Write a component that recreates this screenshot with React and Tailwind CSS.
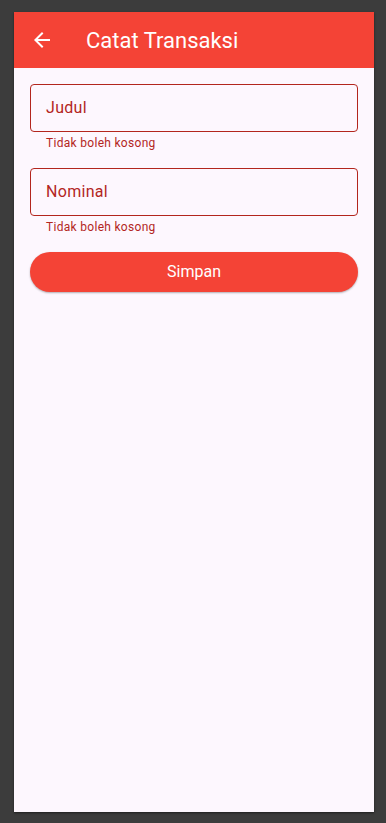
import React from "react";

const ArrowBack = ({ size = 24 }) => (
  <svg width={size} height={size} viewBox="0 0 24 24" fill="currentColor">
    <path d="M20 11H7.83l5.59-5.59L12 4l-8 8 8 8 1.41-1.41L7.83 13H20v-2z" />
  </svg>
);

const Field = ({ label }) => (
  <div className="flex flex-col">
    <div className="h-[48px] rounded-[4px] border border-[#b3261e] flex items-center px-[15px] text-[16px] text-[#b3261e] tracking-[0.3px]">
      {label}
    </div>
    <div className="px-4 pt-[3px] pb-[1px] text-[12px] leading-[16px] text-[#b3261e] tracking-[0.3px]">
      Tidak boleh kosong
    </div>
  </div>
);

export default function App() {
  return (
    <div
      className="w-[386px] h-[823px] bg-[#3c3c3c] pt-[12px] pl-[14px]"
      style={{ fontFamily: "Roboto, 'Liberation Sans', sans-serif" }}
    >
      <div className="w-[360px] h-[800px] bg-[#fdf7fe] flex flex-col shadow-[0_1px_2px_rgba(0,0,0,0.5)]">
        <div className="h-[56px] bg-[#f44336] flex items-center text-white">
          <div className="w-[56px] flex items-center justify-center">
            <ArrowBack size={24} />
          </div>
          <div className="ml-[16px] text-[22px]">Catat Transaksi</div>
        </div>
        <div className="px-4 pt-4 flex flex-col gap-[16px]">
          <Field label="Judul" />
          <Field label="Nominal" />
          <button className="h-[40px] rounded-full bg-[#f44336] text-white text-[16px] shadow-[0_1px_2px_rgba(0,0,0,0.3)]">
            Simpan
          </button>
        </div>
      </div>
    </div>
  );
}
